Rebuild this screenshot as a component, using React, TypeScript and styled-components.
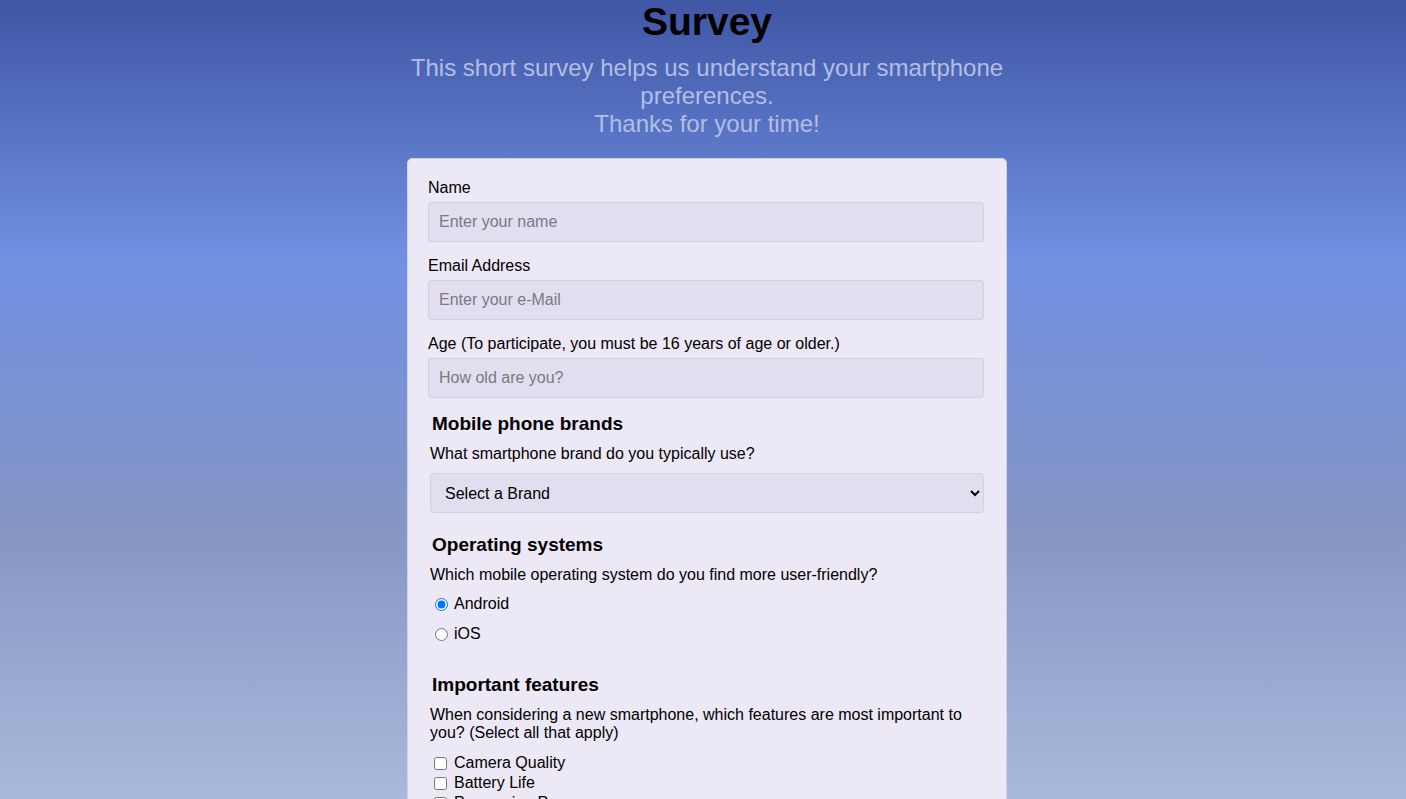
import React from "react";
import styled, { createGlobalStyle } from "styled-components";

const GlobalStyle = createGlobalStyle`
  html, body {
    margin: 0;
    padding: 0;
  }
  body {
    font-family: "Liberation Sans", Arial, sans-serif;
    color: #000;
    background: #a9b9db;
  }
  * { box-sizing: border-box; }
`;

const Page = styled.div`
  min-height: 1100px;
  padding: 0 0 40px 8px;
  background: linear-gradient(
    180deg,
    #3f56a4 0px,
    #7090e3 258px,
    #8596c4 530px,
    #a9b9db 799px,
    #b8c4e2 1100px
  );
  display: flex;
  flex-direction: column;
  align-items: center;
`;

const Header = styled.header`
  width: 600px;
  text-align: center;
`;

const Title = styled.h1`
  margin: 0;
  font-size: 39px;
  line-height: 44px;
  font-weight: bold;
  color: #000;
`;

const Subtitle = styled.p`
  margin: 10px 0 0;
  font-size: 24px;
  line-height: 28px;
  color: #b3bee5;
`;

const Card = styled.form`
  width: 600px;
  margin-top: 20px;
  padding: 20px 20px 30px;
  background: #ece8f6;
  border: 1px solid #d4d0e4;
  border-radius: 5px;
`;

const Field = styled.div`
  margin-bottom: 15px;
`;

const Label = styled.label`
  display: block;
  font-size: 16px;
  line-height: 18px;
  margin-bottom: 5px;
`;

const TextInput = styled.input`
  display: block;
  width: calc(100% - 2px);
  height: 40px;
  padding: 0 10px;
  font-family: inherit;
  font-size: 16px;
  background: #e1dfef;
  border: 1px solid #d3d0e2;
  border-radius: 3px;
  color: #000;
  &::placeholder {
    color: #7a7880;
  }
`;

const Section = styled.div<{ $bottom: number }>`
  margin: 0 2px ${(p) => p.$bottom}px;
`;

const SectionTitle = styled.h3`
  margin: 0;
  padding: 0 2px;
  font-size: 19px;
  line-height: 22px;
  font-weight: bold;
`;

const Question = styled.p<{ $after: number }>`
  margin: 10px 0 ${(p) => p.$after}px;
  font-size: 16px;
  line-height: 18px;
`;

const Select = styled.select`
  display: block;
  width: 100%;
  height: 40px;
  padding: 0 10px;
  font-family: inherit;
  font-size: 16px;
  color: #000;
  background: #e1dfef;
  border: 1px solid #d3d0e2;
  border-radius: 4px;
`;

const OptionRow = styled.label<{ $height: number; $gap: number }>`
  display: flex;
  align-items: center;
  height: ${(p) => p.$height}px;
  margin-bottom: ${(p) => p.$gap}px;
  font-size: 16px;
  line-height: 18px;
`;

const Radio = styled.input`
  width: 13px;
  height: 13px;
  margin: 0 6px 0 5px;
`;

const Check = styled.input`
  width: 13px;
  height: 13px;
  margin: 0 7px 0 4px;
`;

export default function App() {
  return (
    <>
      <GlobalStyle />
      <Page>
        <Header>
          <Title>Survey</Title>
          <Subtitle>
            This short survey helps us understand your smartphone preferences.
            <br />
            Thanks for your time!
          </Subtitle>
        </Header>
        <Card onSubmit={(e) => e.preventDefault()}>
          <Field>
            <Label htmlFor="name">Name</Label>
            <TextInput id="name" type="text" placeholder="Enter your name" />
          </Field>
          <Field>
            <Label htmlFor="email">Email Address</Label>
            <TextInput id="email" type="email" placeholder="Enter your e-Mail" />
          </Field>
          <Field>
            <Label htmlFor="age">
              Age (To participate, you must be 16 years of age or older.)
            </Label>
            <TextInput id="age" type="number" placeholder="How old are you?" />
          </Field>

          <Section $bottom={21}>
            <SectionTitle>Mobile phone brands</SectionTitle>
            <Question $after={10}>
              What smartphone brand do you typically use?
            </Question>
            <Select defaultValue="">
              <option value="">Select a Brand</option>
              <option>Apple</option>
              <option>Samsung</option>
              <option>Google</option>
              <option>Xiaomi</option>
              <option>Other</option>
            </Select>
          </Section>

          <Section $bottom={30}>
            <SectionTitle>Operating systems</SectionTitle>
            <Question $after={10}>
              Which mobile operating system do you find more user-friendly?
            </Question>
            <OptionRow $height={20} $gap={10}>
              <Radio type="radio" name="os" defaultChecked />
              Android
            </OptionRow>
            <OptionRow $height={20} $gap={10}>
              <Radio type="radio" name="os" />
              iOS
            </OptionRow>
          </Section>

          <Section $bottom={20}>
            <SectionTitle>Important features</SectionTitle>
            <Question $after={11}>
              When considering a new smartphone, which features are most
              important to you? (Select all that apply)
            </Question>
            {[
              "Camera Quality",
              "Battery Life",
              "Processing Power",
              "Storage Capacity",
              "Display Quality",
            ].map((f) => (
              <OptionRow key={f} $height={20} $gap={0}>
                <Check type="checkbox" />
                {f}
              </OptionRow>
            ))}
          </Section>
        </Card>
      </Page>
    </>
  );
}
